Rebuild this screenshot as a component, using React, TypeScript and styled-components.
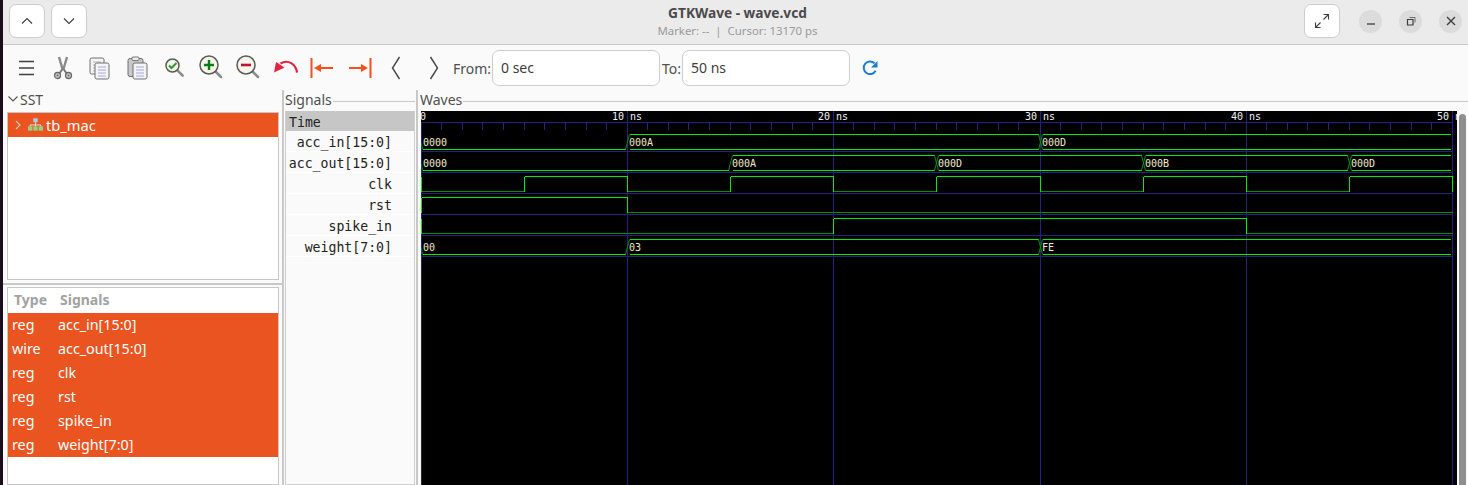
import React from "react";
import styled, { createGlobalStyle } from "styled-components";

const UI = `"Noto Sans", "Open Sans", sans-serif`;
const MONO = `"DejaVu Sans Mono", "Liberation Mono", monospace`;

const Global = createGlobalStyle`
  html, body { margin: 0; padding: 0; height: 485px; overflow: hidden; background: #1c0d1c; }
  #root { height: 485px; }
  * { box-sizing: border-box; }
`;

const Page = styled.div`
  height: 485px;
  width: 1468px;
  padding-left: 3px;
  background: #1c0d1c;
  overflow: hidden;
`;
const Win = styled.div`
  height: 485px;
  display: flex;
  flex-direction: column;
  background: #fafafa;
  font-family: ${UI};
`;
const HeaderBar = styled.header`
  height: 45px;
  flex: none;
  display: grid;
  grid-template-columns: 1fr auto 1fr;
  align-items: start;
  background: #ebebeb;
  border-bottom: 1px solid #c9c9c9;
`;
const HeaderGroup = styled.div<{ $right?: boolean }>`
  display: flex;
  align-items: center;
  padding-top: 4px;
  gap: 6px;
  justify-content: ${(p) => (p.$right ? "flex-end" : "flex-start")};
  padding-left: ${(p) => (p.$right ? 0 : 6)}px;
  padding-right: ${(p) => (p.$right ? 6 : 0)}px;
`;
const HeadBtn = styled.div`
  width: 36px;
  height: 34px;
  border: 1px solid #cdcdcd;
  border-radius: 7px;
  background: #fff;
  display: flex;
  align-items: center;
  justify-content: center;
  color: #3d3d3d;
`;
const WinBtn = styled.div`
  width: 23px;
  height: 23px;
  border-radius: 50%;
  background: #dcdcdc;
  display: flex;
  align-items: center;
  justify-content: center;
  margin-left: 11px;
  color: #3d3d3d;
`;
const FullBtn = styled(HeadBtn)`
  margin-right: 2px;
`;
const TitleBox = styled.div`
  display: flex;
  flex-direction: column;
  align-items: center;
  padding-top: 4px;
  padding-left: 4px;
`;
const Title = styled.div`
  font-size: 13.7px;
  line-height: 18px;
  font-weight: 700;
  color: #4a4a4a;
`;
const Subtitle = styled.div`
  font-size: 11.4px;
  line-height: 17px;
  color: #9a9a9a;
  white-space: pre;
`;
const Toolbar = styled.div`
  height: 45px;
  flex: none;
  display: flex;
  align-items: center;
  padding-left: 5px;
  padding-top: 1px;
`;
const ToolBtn = styled.div<{ $shiftLeft?: number; $shiftRight?: number; $shiftUp?: number }>`
  width: 37px;
  height: 37px;
  flex: none;
  display: flex;
  align-items: center;
  justify-content: center;
  padding-right: ${(p) => p.$shiftLeft ?? 0}px;
  padding-left: ${(p) => p.$shiftRight ?? 0}px;
  padding-bottom: ${(p) => p.$shiftUp ?? 0}px;
`;
const FieldLabel = styled.span`
  font-size: 14px;
  color: #4f4f4f;
  white-space: nowrap;
`;
const FromLabel = styled(FieldLabel)`
  width: 39px;
  margin-left: 1px;
`;
const ToLabel = styled(FieldLabel)`
  width: 20px;
  margin-left: 2px;
`;
const Field = styled.div`
  width: 168px;
  height: 36px;
  border: 1px solid #cdcdcd;
  border-radius: 7px;
  background: #fff;
  padding-left: 8px;
  font-size: 14px;
  line-height: 34px;
  color: #3d3d3d;
`;
const Reload = styled.div`
  width: 40px;
  display: flex;
  justify-content: center;
`;
const Body = styled.div`
  flex: 1;
  min-height: 0;
  display: flex;
`;
const LeftPane = styled.div`
  width: 281px;
  flex: none;
  display: flex;
  flex-direction: column;
  border-right: 2px solid #c8c8c8;
`;
const SstTop = styled.div`
  height: 195px;
  flex: none;
  padding: 0 3px 3px 4px;
  display: flex;
  flex-direction: column;
  border-bottom: 2px solid #c8c8c8;
`;
const SstLabel = styled.div`
  height: 22px;
  flex: none;
  display: flex;
  align-items: center;
  gap: 1px;
  padding-bottom: 4px;
  font-size: 14px;
  color: #4f4f4f;
`;
const Frame = styled.div`
  flex: 1;
  min-height: 0;
  border: 1px solid #c6c6c6;
  background: #fff;
  overflow: hidden;
`;
const TreeRow = styled.div`
  height: 24px;
  background: #e95420;
  color: #fff;
  display: flex;
  align-items: center;
  padding-left: 7px;
  padding-bottom: 1px;
  font-size: 14.7px;
`;
const TreeName = styled.span`
  margin-left: 3px;
`;
const TreeIcon = styled.span`
  display: flex;
  margin-left: 7px;
`;
const SigTop = styled.div`
  flex: 1;
  min-height: 0;
  padding: 2px 3px 0 4px;
  display: flex;
`;
const TableHead = styled.div`
  height: 25px;
  padding-bottom: 2px;
  display: grid;
  grid-template-columns: 46px 1fr;
  align-items: center;
  font-size: 14px;
  font-weight: 700;
  color: #a2a2a2;
`;
const TableRow = styled.div`
  height: 24px;
  padding-bottom: 2px;
  display: grid;
  grid-template-columns: 46px 1fr;
  align-items: center;
  background: #e95420;
  color: #fff;
  font-size: 14.3px;
`;
const Cell = styled.span`
  padding-left: 4px;
  white-space: nowrap;
`;
const HeadCell = styled.span`
  padding-left: 6px;
  white-space: nowrap;
`;
const SignalsPane = styled.div`
  width: 134px;
  flex: none;
  display: flex;
  flex-direction: column;
  padding-left: 1px;
  padding-right: 1px;
  border-right: 2px solid #c8c8c8;
`;
const PaneLabel = styled.div`
  height: 21px;
  flex: none;
  display: flex;
  align-items: center;
  padding-bottom: 2px;
  font-size: 14px;
  color: #4f4f4f;
  &::after {
    content: "";
    flex: 1;
    height: 1px;
    margin-left: 1px;
    margin-top: 4px;
    background: #c8c8c8;
  }
`;
const SignalList = styled.div`
  flex: 1;
  border: 1px solid #cfcfcf;
  border-top: 0;
  background: #fafafa;
  font-family: ${MONO};
  font-size: 13.2px;
  color: #222;
`;
const TimeRow = styled.div`
  height: 20px;
  background: #c6c6c6;
  padding-left: 3px;
  line-height: 23px;
`;
const SigRow = styled.div`
  height: 21px;
  line-height: 24px;
  text-align: right;
  padding-right: 22px;
  border-bottom: 1px solid #fff;
`;
const WavesPane = styled.div`
  flex: 1;
  min-width: 0;
  display: flex;
  flex-direction: column;
  padding-left: 2px;
`;
const WavesInner = styled.div`
  flex: 1;
  min-height: 0;
  display: flex;
  padding-left: 1px;
`;
const Scroll = styled.div`
  width: 11px;
  flex: none;
  padding: 3px 2px 0 2px;
`;
const Thumb = styled.div`
  height: 100%;
  background: #8f8f8f;
  border-radius: 4px 4px 0 0;
`;
const WaveSvg = styled.svg`
  display: block;
  flex: none;
  background: #000;
`;

/* ---------- icons ---------- */
const Chev = ({ d }: { d: string }) => (
  <svg width="12" height="8" viewBox="0 0 12 8" fill="none" stroke="currentColor" strokeWidth="1.1">
    <path d={d} />
  </svg>
);
const ScaleIcon = () => (
  <svg width="16" height="16" viewBox="0 0 16 16" fill="none" stroke="currentColor" strokeWidth="1.1">
    <path d="M1.500 9.500v5h5M1.500 14.500l5-5M9.500 6.500l5-5M9.500 1.500h5v5" />
  </svg>
);
const Burger = () => (
  <svg width="18" height="16" viewBox="0 0 18 16" stroke="#3f3f3f" strokeWidth="1.5">
    <path d="M1 1.500h15M1 8h15M1 14.500h15" />
  </svg>
);
const Scissors = () => (
  <svg width="20" height="24" viewBox="0 0 20 24" fill="none" stroke="#6a6a6a" strokeWidth="1.3">
    <path d="M6 1l3.500 12M14 1l-3.500 12" strokeWidth="2.4" stroke="#8a8a8a" />
    <path d="M9.500 13L6 18M10.500 13L14 18" strokeWidth="2" stroke="#777" />
    <circle cx="4.500" cy="19.500" r="3" fill="#cfcfcf" />
    <circle cx="15.500" cy="19.500" r="3" fill="#cfcfcf" />
    <circle cx="4.500" cy="19.500" r="1" fill="#666" stroke="none" />
    <circle cx="15.500" cy="19.500" r="1" fill="#666" stroke="none" />
  </svg>
);
const Sheet = ({ x, y, w, h, lines }: { x: number; y: number; w: number; h: number; lines: string }) => (
  <g>
    <rect x={x} y={y} width={w} height={h} rx="1.8" fill="#f4f4f4" stroke="#6e6e6e" strokeWidth="1" />
    {[4, 7, 10, 13].map((o) => (
      <path key={o} d={`M${x + 3} ${y + o}h${w - 6}`} stroke={lines} strokeWidth="1" />
    ))}
  </g>
);
const Copy = () => (
  <svg width="21" height="23" viewBox="0 0 21 23" fill="none">
    <Sheet x={1} y={1} w={14} h={16} lines="#b5b5b5" />
    <Sheet x={6} y={6} w={14} h={16} lines="#a6a6e8" />
  </svg>
);
const Paste = () => (
  <svg width="21" height="24" viewBox="0 0 21 24" fill="none">
    <rect x="1" y="2.500" width="15" height="18" rx="2" fill="#c9c9c9" stroke="#6e6e6e" />
    <rect x="5" y="1" width="7" height="3.500" rx="1" fill="#eee" stroke="#777" />
    <Sheet x={6} y={7} w={14} h={16} lines="#a6a6e8" />
  </svg>
);
const Lens = ({ children, r = 9 }: { children?: React.ReactNode; r?: number }) => {
  const s = r * 2 + 8;
  const c = r + 1;
  const k = c + r * 0.72;
  return (
    <svg width={s} height={s} viewBox={`0 0 ${s} ${s}`} fill="none">
      <path d={`M${k} ${k}l5.500 5.500`} stroke="#8c8c8c" strokeWidth="2.6" strokeLinecap="round" />
      <circle cx={c} cy={c} r={r} fill="#f5f5f0" stroke="#5c5c52" strokeWidth="1.5" />
      {children}
    </svg>
  );
};
const ZoomFit = () => (
  <Lens r={6.5}>
    <path d="M4 7.500l2.500 2.500 5-5" stroke="#2f9a2f" strokeWidth="2" />
  </Lens>
);
const ZoomIn = () => (
  <Lens>
    <path d="M5 10h10M10 5v10" stroke="#0d7c0d" strokeWidth="2.4" />
  </Lens>
);
const ZoomOut = () => (
  <Lens>
    <path d="M5 10h10" stroke="#c4122e" strokeWidth="2.6" />
  </Lens>
);
const Undo = () => (
  <svg width="25" height="14" viewBox="0 0 25 14" fill="none">
    <path d="M24 12.500C23 4 15 -1 7.500 3.500" stroke="#e5213f" strokeWidth="2.2" />
    <path d="M1 12.500L3 2 11.500 7.500z" fill="#e5213f" />
  </svg>
);
const First = () => (
  <svg width="24" height="20" viewBox="0 0 24 20" fill="none">
    <path d="M1.500 0v20" stroke="#f4511a" strokeWidth="2" />
    <path d="M10 10h13" stroke="#f4511a" strokeWidth="2" />
    <path d="M4 10l7-4v8z" fill="#f4511a" />
  </svg>
);
const Last = () => (
  <svg width="24" height="20" viewBox="0 0 24 20" fill="none">
    <path d="M22.500 0v20" stroke="#f4511a" strokeWidth="2" />
    <path d="M1 10h13" stroke="#f4511a" strokeWidth="2" />
    <path d="M20 10l-7-4v8z" fill="#f4511a" />
  </svg>
);
const Angle = ({ d }: { d: string }) => (
  <svg width="10" height="24" viewBox="0 0 10 24" fill="none" stroke="#454545" strokeWidth="1.4">
    <path d={d} />
  </svg>
);
const Refresh = () => (
  <svg width="16" height="16" viewBox="0 0 16 16" fill="none">
    <path d="M13.600 10.800A6.300 6.300 0 1 1 12.600 3.400" stroke="#1c7cd6" strokeWidth="2" />
    <path d="M15.500 1v6.500H9z" fill="#1c7cd6" />
  </svg>
);
const TreeGlyph = () => (
  <svg width="15" height="13" viewBox="0 0 17 14">
    <rect x="6" y="0" width="5" height="4.500" fill="#a9cdf0" />
    <path d="M8.500 4.500v3M2.500 9V7.500h12V9M8.500 7.500V9" stroke="#f2f2f2" strokeWidth="1" fill="none" />
    <rect x="0" y="9" width="5" height="5" fill="#8fd37f" />
    <rect x="6" y="9" width="5" height="5" fill="#8fd37f" />
    <rect x="12" y="9" width="5" height="5" fill="#8fd37f" />
  </svg>
);

/* ---------- waveform ---------- */
const MAJORS = [421, 627, 833, 1040, 1246, 1452];
const px = (t: number) => {
  const i = Math.min(Math.floor(t / 10), 5);
  return MAJORS[i] + Math.floor(20.64 * (t - i * 10)) + 0.5;
};
const ROW_TOPS = [134.5, 155.5, 176.5, 197.5, 218.5, 239.5];
const ROW_LINES = [151.5, 172.5, 193.5, 214.5, 235.5, 256.5];
const LOW = 15;
const END = 1451;
const BRIGHT = "#00ec00";
const DIM = "#009000";
const GRID = "#23237f";

type Seg = [number, string];
const vectors: { row: number; segs: Seg[] }[] = [
  { row: 0, segs: [[0, "0000"], [10, "000A"], [30, "000D"]] },
  { row: 1, segs: [[0, "0000"], [15, "000A"], [25, "000D"], [35, "000B"], [45, "000D"]] },
  { row: 5, segs: [[0, "00"], [10, "03"], [30, "FE"]] },
];
const bits: { row: number; steps: [number, number][] }[] = [
  { row: 2, steps: [[0, 0], [5, 1], [10, 0], [15, 1], [20, 0], [25, 1], [30, 0], [35, 1], [40, 0], [45, 1]] },
  { row: 3, steps: [[0, 1], [10, 0]] },
  { row: 4, steps: [[0, 0], [20, 1], [40, 0]] },
];
const isZero = (v: string) => /^0+$/.test(v);
const minorTicks = Array.from({ length: 49 }, (_, i) => i + 1).filter((t) => t % 10);

const Wave = () => (
  <WaveSvg width={1036} height={375} viewBox="421 111 1036 375" fontFamily={MONO} fontSize="10">
    <g shapeRendering="crispEdges">
      <path d="M421 122.500H1452" stroke={GRID} />
      {minorTicks.map((t) => (
        <path key={t} d={`M${px(t)} 122V130`} stroke={GRID} />
      ))}
      {ROW_LINES.map((y) => (
        <path key={y} d={`M421 ${y}H1452`} stroke={GRID} />
      ))}
      {MAJORS.map((_, i) => (
        <path key={i} d={`M${px(i * 10)} ${i === 0 ? 122 : 111}V486`} stroke={GRID} />
      ))}
    </g>
    {vectors.map(({ row, segs }) =>
      segs.map(([t, val], i) => {
        const top = ROW_TOPS[row];
        const bot = top + LOW;
        const a = px(t);
        const b = i + 1 < segs.length ? px(segs[i + 1][0]) - 2 : END;
        const zero = isZero(val);
        const start = i ? a + 2 : a + 1;
        return (
          <g key={`${row}-${i}`}>
            <path d={`M${start} ${bot}H${b}`} stroke={BRIGHT} shapeRendering="crispEdges" />
            {!zero && <path d={`M${start} ${top}H${b}`} stroke={BRIGHT} shapeRendering="crispEdges" />}
            {i > 0 && (
              <>
                <path d={`M${a - 2} ${bot}L${a + 2} ${top}`} stroke={DIM} />
                {!isZero(segs[i - 1][1]) && <path d={`M${a - 2} ${top}L${a + 2} ${bot}`} stroke={DIM} />}
              </>
            )}
            {i === 0 && <path d={`M${a} ${bot - 6}L${a + 1} ${bot}`} stroke={DIM} />}
            <text x={a + 1.5} y={top + 11.3} fill="#f2eccb">
              {val}
            </text>
          </g>
        );
      })
    )}
    {bits.map(({ row, steps }) =>
      steps.map(([t, v], i) => {
        const top = ROW_TOPS[row];
        const bot = top + LOW;
        const a = px(t);
        const b = i + 1 < steps.length ? px(steps[i + 1][0]) : 1452.5;
        const y = v ? top : bot;
        return (
          <g key={`${row}-${i}`} shapeRendering="crispEdges">
            <path d={`M${a} ${top}V${bot}`} stroke={BRIGHT} />
            <path d={`M${a} ${y}H${b}`} stroke={v ? BRIGHT : DIM} />
          </g>
        );
      })
    )}
    <path d="M1452.500 176.500V191.500" stroke={BRIGHT} shapeRendering="crispEdges" />
    <g fill="#f4f4f4">
      <text x={420} y={120}>0</text>
      {[10, 20, 30, 40, 50].map((t) => (
        <React.Fragment key={t}>
          <text x={px(t) - 3.5} y={120} textAnchor="end">{t}</text>
          <text x={px(t) + 2.5} y={120}>ns</text>
        </React.Fragment>
      ))}
    </g>
  </WaveSvg>
);

const signalRows: [string, string][] = [
  ["reg", "acc_in[15:0]"],
  ["wire", "acc_out[15:0]"],
  ["reg", "clk"],
  ["reg", "rst"],
  ["reg", "spike_in"],
  ["reg", "weight[7:0]"],
];

export default function App() {
  return (
    <Page>
      <Global />
      <Win>
        <HeaderBar>
          <HeaderGroup>
            <HeadBtn><Chev d="M1 6.500l5-5 5 5" /></HeadBtn>
            <HeadBtn><Chev d="M1 1.500l5 5 5-5" /></HeadBtn>
          </HeaderGroup>
          <TitleBox>
            <Title>GTKWave - wave.vcd</Title>
            <Subtitle>{"Marker: --  |  Cursor: 13170 ps"}</Subtitle>
          </TitleBox>
          <HeaderGroup $right>
            <FullBtn><ScaleIcon /></FullBtn>
            <WinBtn>
              <svg width="10" height="10" viewBox="0 0 10 10"><path d="M1 8h8" stroke="currentColor" strokeWidth="1.3" /></svg>
            </WinBtn>
            <WinBtn>
              <svg width="10" height="10" viewBox="0 0 10 10" fill="none" stroke="currentColor"><path d="M1.500 3.500h5.500v5.500H1.500z" strokeWidth="1.2" /><path d="M3.500 1.500h5.500v5" strokeWidth=".7" /></svg>
            </WinBtn>
            <WinBtn>
              <svg width="10" height="10" viewBox="0 0 10 10"><path d="M1 1l8 8M9 1l-8 8" stroke="currentColor" strokeWidth="1.4" /></svg>
            </WinBtn>
          </HeaderGroup>
        </HeaderBar>
        <Toolbar>
          <ToolBtn><Burger /></ToolBtn>
          <ToolBtn $shiftLeft={2}><Scissors /></ToolBtn>
          <ToolBtn $shiftLeft={2}><Copy /></ToolBtn>
          <ToolBtn><Paste /></ToolBtn>
          <ToolBtn $shiftRight={2}><ZoomFit /></ToolBtn>
          <ToolBtn><ZoomIn /></ToolBtn>
          <ToolBtn><ZoomOut /></ToolBtn>
          <ToolBtn $shiftUp={3}><Undo /></ToolBtn>
          <ToolBtn $shiftLeft={2}><First /></ToolBtn>
          <ToolBtn><Last /></ToolBtn>
          <ToolBtn $shiftLeft={2}><Angle d="M8.500 1L1.500 12l7 11" /></ToolBtn>
          <ToolBtn><Angle d="M1.500 1L8.500 12l-7 11" /></ToolBtn>
          <FromLabel>From:</FromLabel>
          <Field>0 sec</Field>
          <ToLabel>To:</ToLabel>
          <Field>50 ns</Field>
          <Reload><Refresh /></Reload>
        </Toolbar>
        <Body>
          <LeftPane>
            <SstTop>
              <SstLabel>
                <svg width="12" height="8" viewBox="0 0 12 8" fill="none" stroke="#555" strokeWidth="1.1"><path d="M1.500 1.500l4.500 4.500 4.500-4.500" /></svg>
                SST
              </SstLabel>
              <Frame>
                <TreeRow>
                  <svg width="6" height="10" viewBox="0 0 6 10" fill="none" stroke="#ffc9b4" strokeWidth="1.1"><path d="M1 1l4 4-4 4" /></svg>
                  <TreeIcon><TreeGlyph /></TreeIcon>
                  <TreeName>tb_mac</TreeName>
                </TreeRow>
              </Frame>
            </SstTop>
            <SigTop>
              <Frame>
                <TableHead>
                  <HeadCell>Type</HeadCell>
                  <HeadCell>Signals</HeadCell>
                </TableHead>
                {signalRows.map(([t, n]) => (
                  <TableRow key={n}>
                    <Cell>{t}</Cell>
                    <Cell>{n}</Cell>
                  </TableRow>
                ))}
              </Frame>
            </SigTop>
          </LeftPane>
          <SignalsPane>
            <PaneLabel>Signals</PaneLabel>
            <SignalList>
              <TimeRow>Time</TimeRow>
              {signalRows.map(([, n]) => (
                <SigRow key={n}>{n}</SigRow>
              ))}
            </SignalList>
          </SignalsPane>
          <WavesPane>
            <PaneLabel>Waves</PaneLabel>
            <WavesInner>
              <Wave />
              <Scroll><Thumb /></Scroll>
            </WavesInner>
          </WavesPane>
        </Body>
      </Win>
    </Page>
  );
}
